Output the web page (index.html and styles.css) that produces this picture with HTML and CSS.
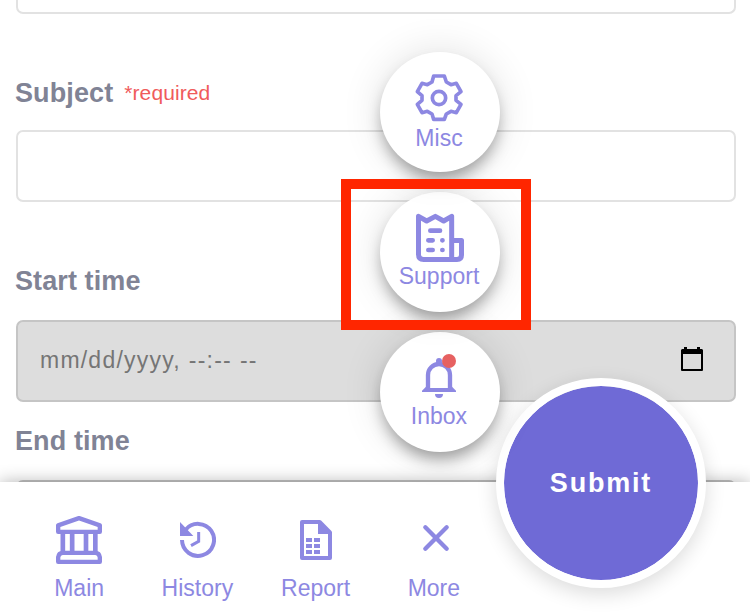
FILE: index.html
```html
<!DOCTYPE html>
<html lang="en">
<head>
<meta charset="utf-8">
<title>Request form</title>
<link rel="stylesheet" href="styles.css">
</head>
<body>
<main class="screen">
  <form class="form">
    <div class="field field-previous"></div>
    <div class="label label-subject"><span>Subject</span><span class="required">*required</span></div>
    <div class="field field-subject"></div>
    <div class="label label-start">Start time</div>
    <div class="field field-date">
      <span class="date-text">mm/dd/yyyy, --:-- --</span>
      <svg class="calendar" viewBox="360 108 72 78"><path fill="none" stroke="#000" stroke-width="6" stroke-linejoin="round" d="M366 121H426V180H366Z"/><path d="M366 117H426V132H366ZM372 111h9v8h-9zM411 111h9v8h-9z"/></svg>
    </div>
    <div class="label label-end">End time</div>
    <div class="field field-date field-end"></div>
  </form>

  <nav class="nav">
    <div class="tab">
      <svg class="icon-main" viewBox="75 45 144 150"><g fill="none" stroke="currentColor" stroke-width="13" stroke-linejoin="round"><path d="M84.500 95.500V76L147 54.500L209.500 76V95.500Z"/><path d="M84.500 185.500V172Q86 158.500 98 158.500H196Q208 158.500 209.500 172V185.500Z"/><path stroke-width="14" d="M98.500 98V158M126.500 98V158M168 98V158M196 98V158"/></g></svg>
      <span>Main</span>
    </div>
    <div class="tab">
      <svg class="icon-history" viewBox="450 63 108 114"><path fill="none" stroke="currentColor" stroke-width="12" d="M456 120A48 48 0 1 0 467 89"/><path fill="currentColor" d="M450 66V108H490Z"/><path fill="none" stroke="currentColor" stroke-width="9" d="M506 96V124L483 137"/></svg>
      <span>History</span>
    </div>
    <div class="tab">
      <svg class="icon-report" viewBox="120 60 96 120"><path fill="none" stroke="currentColor" stroke-width="12" stroke-linejoin="round" d="M126 66H179L210 97V174H126Z"/><path fill="currentColor" d="M174 62V102H214ZM138 114h18v12h-18zM162 114h18v12h-18zM138 132h18v12h-18zM162 132h18v12h-18zM138 150h18v12h-18zM162 150h18v12h-18z"/></svg>
      <span>Report</span>
    </div>
    <div class="tab">
      <svg class="icon-close" viewBox="486 72 84 84"><path fill="none" stroke="currentColor" stroke-width="13" stroke-linecap="round" d="M496 82L560 146M560 82L496 146"/></svg>
      <span>More</span>
    </div>
  </nav>

  <div class="menu">
    <div class="bubble bubble-misc">
      <svg class="icon-gear" viewBox="132 99 150 150"><g fill="none" stroke="currentColor" stroke-width="11" stroke-linejoin="round"><path d="M191 108H223L229 126L243 134L259 130L273 155L258 167V181L273 193L259 218L243 214L229 222L223 238H191L186 222L172 214L156 218L142 193L156 181V167L142 155L156 130L172 134L186 126Z"/><circle cx="207" cy="174" r="20"/></g></svg>
      <span>Misc</span>
    </div>
    <div class="bubble bubble-support">
      <svg class="icon-receipt" viewBox="240 129 150 150"><g fill="none" stroke="currentColor" stroke-width="15" stroke-linejoin="round" stroke-linecap="round"><path d="M250.500 139L275 153L301 139L326 153L350 139V268.500H266Q250.500 268.500 250.500 253ZM351 211.500H379.500V255Q379.500 268.500 366 268.500H351"/><path stroke-width="14" d="M286 182H315M280 211H293M322 211H322.500M280 240H293M322 240H322.500"/></g></svg>
      <span>Support</span>
    </div>
    <div class="bubble bubble-inbox">
      <svg class="icon-bell" viewBox="150 84 120 144"><path fill="none" stroke="currentColor" stroke-width="13" d="M174 192V150A33 33 0 0 1 240 150V192"/><circle cx="207" cy="108" r="9" fill="currentColor"/><path fill="currentColor" d="M156 201V197L168 185V189H246V185L258 197V201ZM195 207H219A12 12 0 0 1 195 207"/><circle cx="237" cy="108" r="21" fill="#e66161"/></svg>
      <span>Inbox</span>
    </div>
  </div>
  <div class="highlight"></div>
  <button class="submit" type="button">Submit</button>
</main>
</body>
</html>
```
FILE: styles.css
```css
* { box-sizing: border-box; }
body {
  margin: 0;
  background: #fff;
  font-family: "Liberation Sans", Arial, sans-serif;
}
svg { display: block; flex: none; }
.screen {
  position: relative;
  width: 750px;
  height: 614px;
  overflow: hidden;
}
.form {
  height: 482px;
  padding: 0 14px 0 16px;
  overflow: hidden;
}
.field {
  border: 2px solid #e2e2e2;
  border-radius: 7px;
  background: #fff;
}
.field-previous {
  height: 14px;
  border-top: 0;
  border-radius: 0 0 7px 7px;
}
.field-subject { height: 72px; }
.field-date {
  display: flex;
  align-items: center;
  justify-content: space-between;
  height: 82px;
  padding: 0 30px 0 22px;
  border-color: #c5c5c5;
  background: #ddd;
}
.date-text {
  margin-bottom: 2px;
  color: #757575;
  font-size: 23px;
  line-height: 28px;
  letter-spacing: 1.22px;
  word-spacing: .4px;
  white-space: pre;
}
.calendar { width: 24px; height: 26px; margin-bottom: 4px; }
.label {
  display: flex;
  height: 32px;
  margin-left: -1px;
  color: #808395;
  font-size: 27px;
  font-weight: bold;
  line-height: 32px;
  letter-spacing: .1px;
}
.label-subject { margin-top: 63px; margin-bottom: 21px; }
.label-start { margin-top: 63px; margin-bottom: 23px; }
.label-end { margin-top: 23px; margin-bottom: 23px; }
.required {
  margin-left: 11px;
  color: #f05b5b;
  font-size: 21px;
  font-weight: normal;
}
.nav {
  position: relative;
  display: flex;
  height: 132px;
  padding: 33px 257px 0 20px;
  background: #fff;
  box-shadow: 0 0 16px rgba(0, 0, 0, .3);
}
.tab {
  display: flex;
  flex: 1;
  flex-direction: column;
  align-items: center;
  color: #8d88e2;
  font-size: 23px;
  line-height: 28px;
}
.tab span { margin-top: auto; margin-bottom: 12px; }
.icon-main { width: 48px; height: 50px; }
.icon-history { width: 36px; height: 38px; margin: 6px 0 0 1px; }
.icon-report { width: 32px; height: 40px; margin-top: 5px; }
.icon-close { width: 28px; height: 28px; margin: 9px 0 0 4px; }
.menu {
  position: absolute;
  top: 52px;
  left: 380px;
  display: flex;
  flex-direction: column;
  gap: 20px;
}
.bubble {
  position: relative;
  display: flex;
  flex-direction: column;
  align-items: center;
  width: 120px;
  height: 120px;
  padding: 21px 2px 0 0;
  border-radius: 50%;
  background: #fff;
  box-shadow: 0 0 40px rgba(0, 0, 0, .12), 0 10px 16px -3px rgba(0, 0, 0, .36);
  color: #8d88e2;
  font-size: 23px;
  line-height: 28px;
}
.bubble-misc { z-index: 3; }
.bubble-support { z-index: 2; }
.bubble-inbox { z-index: 1; }
.icon-gear { width: 50px; height: 50px; margin-bottom: 1px; }
.icon-receipt { width: 50px; height: 50px; margin: 0 0 -1px 2px; }
.icon-bell { width: 40px; height: 48px; margin: 0 0 1px 2px; }
.highlight {
  position: absolute;
  z-index: 4;
  top: 179px;
  left: 341px;
  width: 190px;
  height: 151px;
  border: 10px solid #ff2600;
}
.submit {
  position: absolute;
  top: 378px;
  left: 496px;
  width: 210px;
  height: 210px;
  padding: 0;
  border: 8px solid #fff;
  border-radius: 50%;
  background: #6f6ad6 padding-box;
  box-shadow: 0 6px 20px rgba(0, 0, 0, .14);
  color: #fff;
  font: bold 27px/32px "Liberation Sans", Arial, sans-serif;
  letter-spacing: 1.8px;
}
```
